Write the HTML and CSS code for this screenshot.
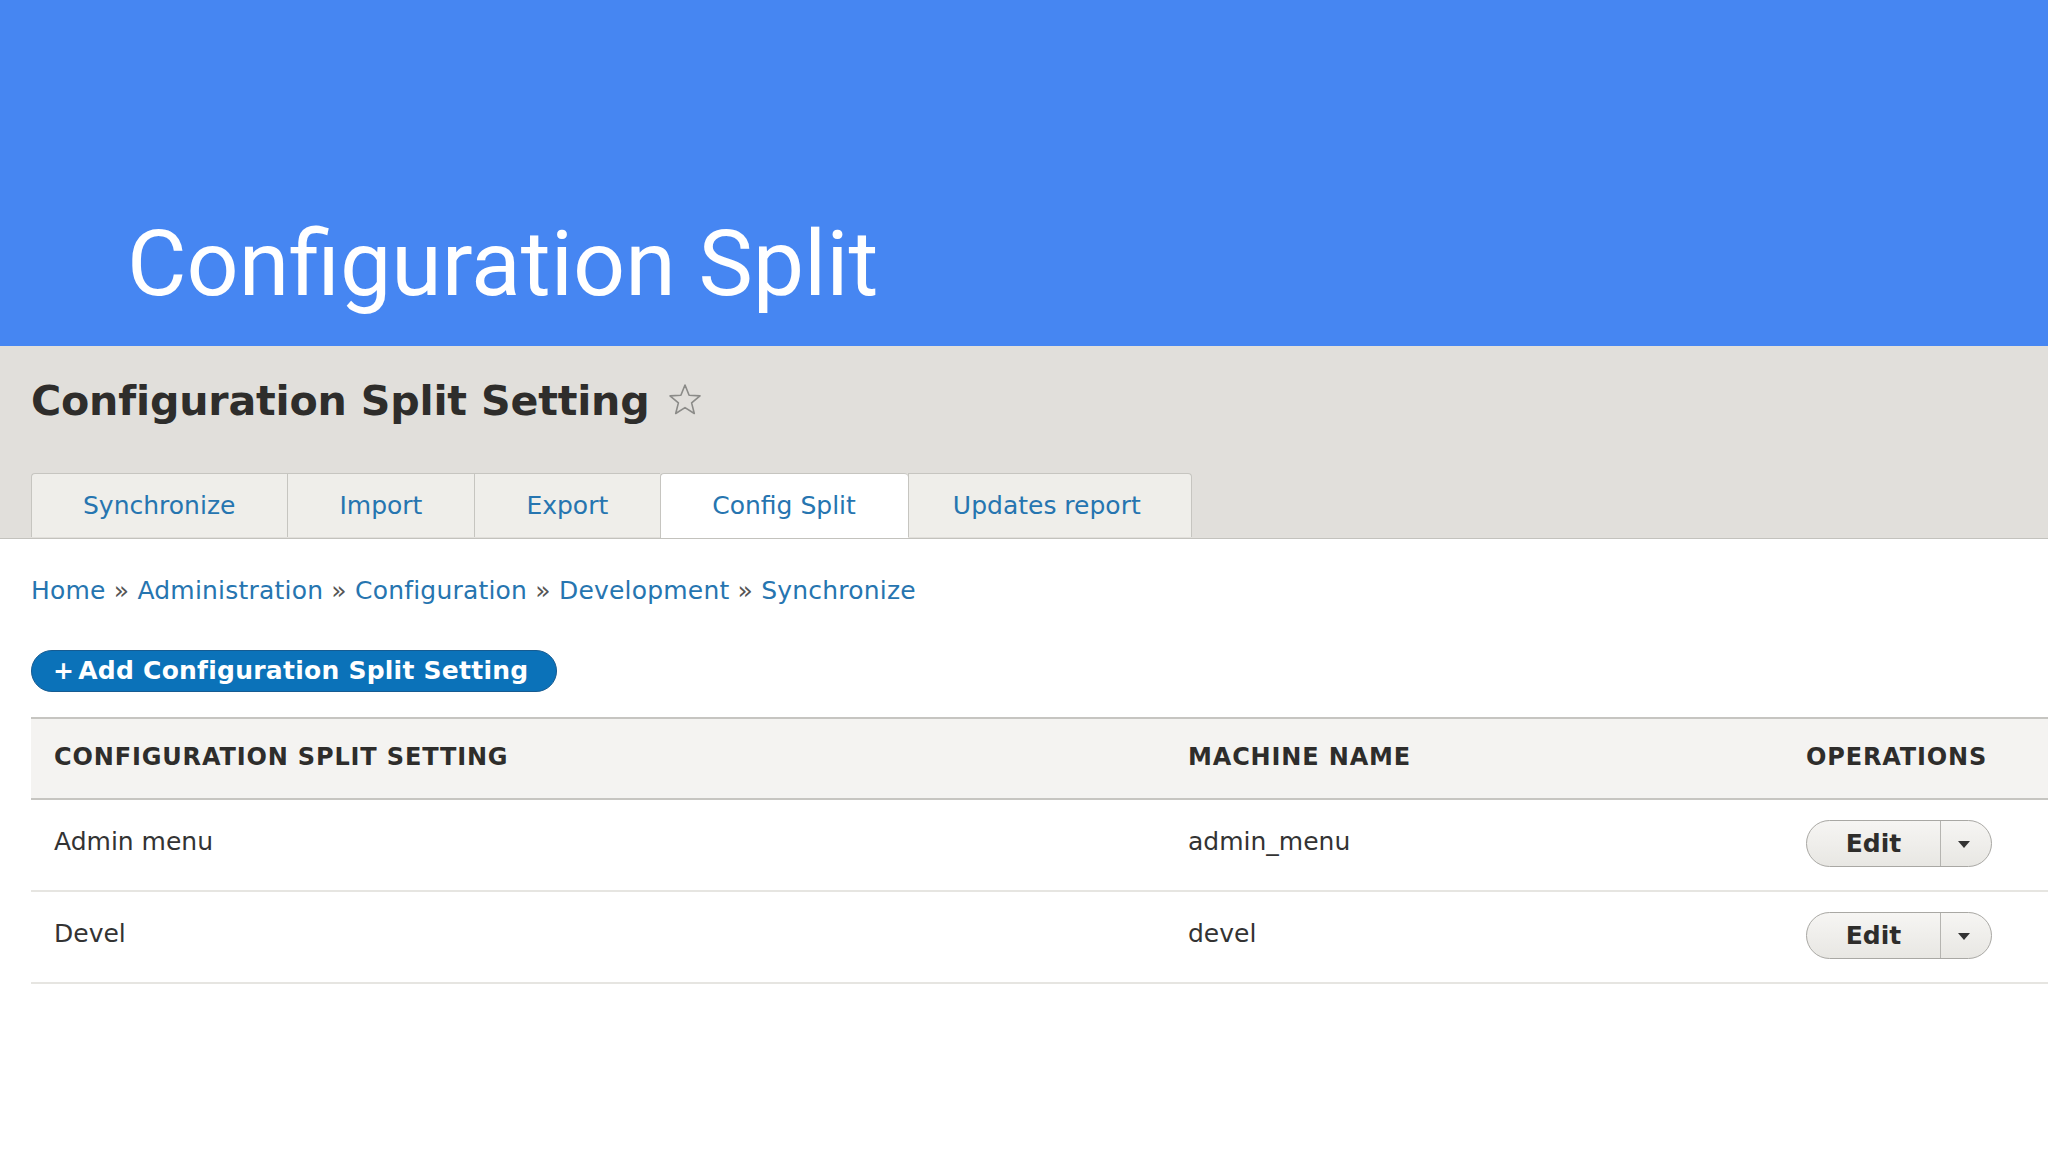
FILE: index.html
```html
<!DOCTYPE html>
<html lang="en">
<head>
<meta charset="utf-8">
<title>Configuration Split</title>
<link rel="stylesheet" href="styles.css">
</head>
<body>
<header class="slide-header">
  <div class="slide-title">Configuration Split</div>
</header>
<section class="admin-header">
  <div class="page-title-row">
    <h1 class="page-title">Configuration Split Setting</h1>
    <svg class="star" viewBox="0 0 36 36" width="36" height="36" aria-hidden="true">
      <path d="M18 3 L22.1 13.2 L33 13.9 L24.6 20.9 L27.3 31.5 L18 25.6 L8.7 31.5 L11.4 20.9 L3 13.9 L13.9 13.2 Z" fill="none" stroke="#8b8b88" stroke-width="1.6" stroke-linejoin="round"/>
    </svg>
  </div>
  <nav class="tabs">
    <a class="tab">Synchronize</a>
    <a class="tab">Import</a>
    <a class="tab">Export</a>
    <a class="tab tab-active">Config Split</a>
    <a class="tab tab-last">Updates report</a>
  </nav>
</section>
<main class="content">
  <div class="breadcrumb">
    <a>Home</a> » <a>Administration</a> » <a>Configuration</a> » <a>Development</a> » <a>Synchronize</a>
  </div>
  <div class="actions">
    <a class="button-action"><span class="plus">+</span>Add Configuration Split Setting</a>
  </div>
  <table class="listing">
    <colgroup>
      <col class="col-label">
      <col class="col-machine">
      <col class="col-ops">
    </colgroup>
    <thead>
      <tr>
        <th>Configuration Split Setting</th>
        <th>Machine name</th>
        <th>Operations</th>
      </tr>
    </thead>
    <tbody>
      <tr>
        <td>Admin menu</td>
        <td>admin_menu</td>
        <td>
          <div class="dropbutton">
            <span class="drop-main">Edit</span>
            <span class="drop-toggle"><span class="caret"></span></span>
          </div>
        </td>
      </tr>
      <tr>
        <td>Devel</td>
        <td>devel</td>
        <td>
          <div class="dropbutton">
            <span class="drop-main">Edit</span>
            <span class="drop-toggle"><span class="caret"></span></span>
          </div>
        </td>
      </tr>
    </tbody>
  </table>
</main>
</body>
</html>
```
FILE: styles.css
```css
html, body {
  margin: 0;
  padding: 0;
  background: #ffffff;
}

body {
  width: 2048px;
  height: 1152px;
  overflow: hidden;
  font-family: "DejaVu Sans", "Liberation Sans", sans-serif;
  color: #333333;
}

.slide-header {
  height: 346px;
  background: #4686f2;
  box-sizing: border-box;
  padding: 214px 0 0 127px;
}

.slide-title {
  font-family: Roboto, "Liberation Sans", sans-serif;
  font-size: 91.5px;
  line-height: 100px;
  color: #ffffff;
  font-weight: 400;
}

.admin-header {
  background: #e1dfdb;
  border-bottom: 1px solid #c3c2bd;
  padding: 30px 0 0 31px;
  box-sizing: border-box;
  height: 193px;
  display: flex;
  flex-direction: column;
}

.page-title-row {
  display: flex;
  align-items: center;
  gap: 18px;
  height: 50px;
}

.page-title {
  margin: 0;
  font-size: 41.2px;
  line-height: 50px;
  font-weight: bold;
  color: #2e2d2b;
  letter-spacing: -0.2px;
}

.star {
  display: block;
  margin-top: -2px;
}

.tabs {
  display: flex;
  margin-top: 47px;
}

.tab {
  display: block;
  height: 64px;
  line-height: 63px;
  padding: 0 52px 0 51px;
  font-size: 25px;
  color: #2675b0;
  background: #efeeea;
  border: 1px solid #c6c5c0;
  border-bottom: none;
  border-right: none;
  box-sizing: border-box;
  white-space: nowrap;
}

.tab:first-child {
  border-top-left-radius: 4px;
}

.tab-last {
  border-right: 1px solid #c6c5c0;
  border-top-right-radius: 4px;
  padding: 0 50px 0 44px;
}

.tab-active {
  background: #ffffff;
  height: 65px;
  border-top-left-radius: 4px;
  border-top-right-radius: 4px;
}

.content {
  padding: 34px 0 0 31px;
}

.breadcrumb {
  font-size: 25px;
  letter-spacing: 0.2px;
  line-height: 36px;
  color: #555555;
}

.breadcrumb a {
  color: #2675b0;
}

.actions {
  margin-top: 41px;
  display: flex;
}

.button-action {
  display: block;
  height: 42px;
  line-height: 40px;
  box-sizing: border-box;
  padding: 0 28px 0 21px;
  border: 1px solid #165b91;
  border-radius: 21px;
  background: #0b72b9;
  color: #ffffff;
  font-weight: bold;
  font-size: 25px;
  letter-spacing: 0.25px;
  white-space: nowrap;
}

.plus {
  margin-right: 4px;
}

.listing {
  margin-top: 25px;
  width: 2017px;
  border-collapse: collapse;
  table-layout: fixed;
}

.col-label { width: 1134px; }
.col-machine { width: 618px; }

.listing th {
  background: #f4f3f1;
  border-top: 2px solid #c6c5c1;
  border-bottom: 2px solid #c6c5c1;
  height: 81px;
  box-sizing: border-box;
  text-align: left;
  text-transform: uppercase;
  font-size: 24px;
  letter-spacing: 0.85px;
  font-weight: bold;
  color: #2e2d2b;
  padding: 0 0 4px 23px;
}

.listing td {
  height: 92px;
  box-sizing: border-box;
  border-bottom: 2px solid #e6e5e1;
  padding: 0 0 7px 23px;
  font-size: 25px;
  color: #333333;
  vertical-align: middle;
}

.dropbutton {
  display: inline-flex;
  vertical-align: middle;
  height: 47px;
  box-sizing: border-box;
  border: 1px solid #a9a8a4;
  border-radius: 24px;
  background: linear-gradient(#f6f5f3, #e8e7e3);
  overflow: hidden;
  margin-top: 3px;
}

.drop-main {
  display: block;
  width: 133px;
  text-align: center;
  line-height: 45px;
  font-weight: bold;
  font-size: 25px;
  color: #2e2d2b;
  border-right: 1px solid #b5b4b0;
}

.drop-toggle {
  display: flex;
  width: 50px;
  align-items: center;
  justify-content: center;
}

.caret {
  display: block;
  width: 0;
  height: 0;
  border-left: 6px solid transparent;
  border-right: 6px solid transparent;
  border-top: 7px solid #333333;
  margin-left: -4px;
  margin-top: 2px;
}
```
